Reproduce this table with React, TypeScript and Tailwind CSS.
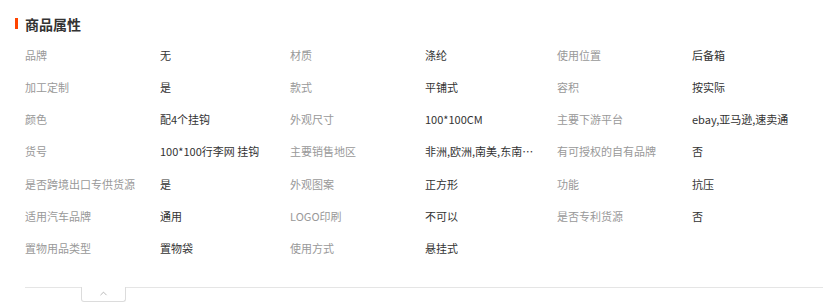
import { ChevronUp } from "lucide-react";

const attrs: [string, string][] = [
  ["品牌", "无"],
  ["材质", "涤纶"],
  ["使用位置", "后备箱"],
  ["加工定制", "是"],
  ["款式", "平铺式"],
  ["容积", "按实际"],
  ["颜色", "配4个挂钩"],
  ["外观尺寸", "100*100CM"],
  ["主要下游平台", "ebay,亚马逊,速卖通"],
  ["货号", "100*100行李网 挂钩"],
  ["主要销售地区", "非洲,欧洲,南美,东南亚,北美,东北亚,中东"],
  ["有可授权的自有品牌", "否"],
  ["是否跨境出口专供货源", "是"],
  ["外观图案", "正方形"],
  ["功能", "抗压"],
  ["适用汽车品牌", "通用"],
  ["LOGO印刷", "不可以"],
  ["是否专利货源", "否"],
  ["置物用品类型", "置物袋"],
  ["使用方式", "悬挂式"],
];

export default function App() {
  return (
    <div
      className="w-[839px] h-[304px] bg-white pl-[25px] pr-4 pt-[17px]"
      style={{ fontFamily: '"Noto Sans CJK SC", "Liberation Sans", sans-serif' }}
    >
      {/* Title */}
      <div className="relative flex items-center h-[14px]">
        <span className="absolute -left-[10px] top-[1px] w-[3px] h-[11px] bg-[#ff4400]" />
        <h3 className="text-[14px] font-bold text-[#333] leading-none">商品属性</h3>
      </div>

      {/* Attributes */}
      <div className="mt-[8px] grid grid-cols-[135px_130px_135px_132px_135px_1fr] auto-rows-[32.2px] text-[11px]">
        {attrs.map(([k, v]) => (
          <div key={k} className="contents">
            <div className="flex items-center text-[#999] whitespace-nowrap">{k}</div>
            <div className="flex items-center text-[#333] min-w-0">
              <span className="max-w-[110px] truncate whitespace-nowrap">{v}</span>
            </div>
          </div>
        ))}
      </div>

      {/* Collapse */}
      <div className="mt-[23px] border-t border-[#e5e5e5]">
        <div className="ml-[56px] -mt-px w-[45px] h-[15px] bg-white border-x border-b border-[#dcdcdc] rounded-b-[3px] flex items-start justify-center">
          <ChevronUp size={11} strokeWidth={1.5} className="text-[#999] mt-[1px]" />
        </div>
      </div>
    </div>
  );
}
